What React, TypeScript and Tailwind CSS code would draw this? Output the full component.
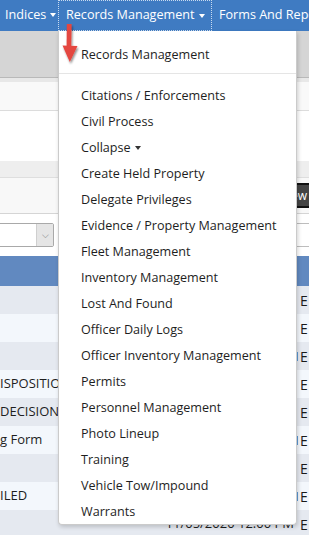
import React from "react";

const menuItems = [
  "Citations / Enforcements",
  "Civil Process",
  "Collapse",
  "Create Held Property",
  "Delegate Privileges",
  "Evidence / Property Management",
  "Fleet Management",
  "Inventory Management",
  "Lost And Found",
  "Officer Daily Logs",
  "Officer Inventory Management",
  "Permits",
  "Personnel Management",
  "Photo Lineup",
  "Training",
  "Vehicle Tow/Impound",
  "Warrants",
];

// background grid rows: left text, alternate shade, small blue mark on the right
const rows = [
  { text: "", mark: false },
  { text: "", mark: false },
  { text: "", mark: true },
  { text: "ISPOSITION", mark: false },
  { text: "DECISION N", mark: false },
  { text: "g Form", mark: true },
  { text: "", mark: false },
  { text: "ILED", mark: true },
  { text: "", mark: false },
];

const Caret = ({ className = "" }: { className?: string }) => (
  <span
    className={`inline-block w-0 h-0 border-l-[3.5px] border-r-[3.5px] border-t-[4px] border-l-transparent border-r-transparent ${className}`}
  />
);

const RedArrow = () => (
  <svg
    className="absolute left-[60px] top-[22px]"
    width="22"
    height="46"
    viewBox="0 0 22 46"
  >
    <defs>
      <filter id="sh" x="-50%" y="-50%" width="200%" height="200%">
        <feGaussianBlur in="SourceAlpha" stdDeviation="1.2" />
        <feOffset dx="1" dy="1.5" result="b" />
        <feComponentTransfer>
          <feFuncA type="linear" slope="0.45" />
        </feComponentTransfer>
        <feMerge>
          <feMergeNode />
          <feMergeNode in="SourceGraphic" />
        </feMerge>
      </filter>
    </defs>
    <g filter="url(#sh)">
      <path d="M6.8 2 L11.6 2 L11.2 25 L6.6 25 Z" fill="#e4463f" />
      <path d="M2.5 23.5 L17.5 24 L9.8 40 Z" fill="#e4463f" />
    </g>
  </svg>
);

export default function App() {
  return (
    <div
      className="relative w-[309px] h-[535px] overflow-hidden bg-white text-[12.6px] text-[#1e1e1e]"
      style={{ fontFamily: '"Open Sans", "Noto Sans", Arial, sans-serif' }}
    >
      {/* top navigation */}
      <div className="h-[31px] bg-[#3f7bc2] flex items-center text-white whitespace-nowrap">
        <div className="shrink-0 flex items-center pl-[5px] w-[58px]">
          Indices
          <Caret className="ml-[4px] border-t-white" />
        </div>
        <div className="shrink-0 h-[31px] w-[154px] flex items-center pl-[7px] border border-dotted border-[#c9dbf0]">
          Records Management
          <Caret className="ml-[5px] border-t-white" />
        </div>
        <div className="shrink-0 pl-[7px]">Forms And Reports</div>
      </div>

      {/* page behind the menu */}
      <div className="h-[47px] bg-[#d5d5d5] border-b border-[#b9b9b9]" />
      <div className="h-[4px] bg-[#e8e8e8]" />
      <div className="h-[29px] bg-[#f9f9f9] border-b border-[#dcdcdc]" />
      <div className="h-[50px] bg-white" />
      <div className="h-[17px] bg-[#eeeeee] border-b border-[#dedede]" />
      <div className="h-[36px] bg-[#f8f8f8] border-b border-[#d5d5d5] flex items-center justify-end">
        <div className="h-[25px] w-[44px] bg-[#444] border-2 border-[#111] text-white text-[12px] flex items-center pl-[6px] mr-[-9px]">
          New
        </div>
      </div>
      <div className="h-[42px] bg-white flex items-center justify-between">
        <div className="h-[24px] w-[56px] -ml-[2px] border border-[#a9a9a9] bg-white flex justify-end rounded-[2px]">
          <div className="w-[17px] bg-[#e5e5e5] border-l border-[#cfcfcf] flex items-center justify-center text-[#777] text-[9px]">
            ⌵
          </div>
        </div>
        <div className="h-[24px] w-[30px] border border-[#bdbdbd] border-r-0" />
      </div>
      <div className="h-[30px] bg-[#6189c0]" />
      {rows.map((r, i) => (
        <div
          key={i}
          className={`h-[28px] flex items-center text-[13px] ${i % 2 === 0 ? "bg-[#e5e9f0]" : "bg-[#f3f7fc]"}`}
        >
          <div className="w-[58px] overflow-hidden whitespace-nowrap">{r.text}</div>
          <div className="flex-1 whitespace-nowrap text-right pr-[2px]">
            {i === 8 && "11/05/2020 12:00 PM"}
          </div>
          <div className="w-[13px] flex items-center h-full">
            <div className={`w-[2px] h-[9px] ${r.mark ? "bg-[#5d9ad6]" : ""}`} />
            <span className="ml-[2px] text-[14px] text-[#1a1a1a]">E</span>
          </div>
        </div>
      ))}

      {/* open dropdown */}
      <div className="absolute left-[58px] top-[31px] w-[239px] h-[494px] bg-white border border-[#cbcbcb] border-t-0 rounded-b-[4px] shadow-[1px_2px_4px_rgba(0,0,0,0.18)]">
        <div className="pt-[11px] mb-[5px]">
          <div className="h-[26px] leading-[26px] pl-[22px]">Records Management</div>
        </div>
        <div className="h-px bg-[#e5e5e5]" />
        <div className="pt-[9px]">
          {menuItems.map((item) => (
            <div key={item} className="h-[26px] leading-[26px] pl-[22px] flex items-center whitespace-nowrap">
              {item}
              {item === "Collapse" && <Caret className="ml-[4px] border-t-[#333]" />}
            </div>
          ))}
        </div>
      </div>

      <RedArrow />
    </div>
  );
}
